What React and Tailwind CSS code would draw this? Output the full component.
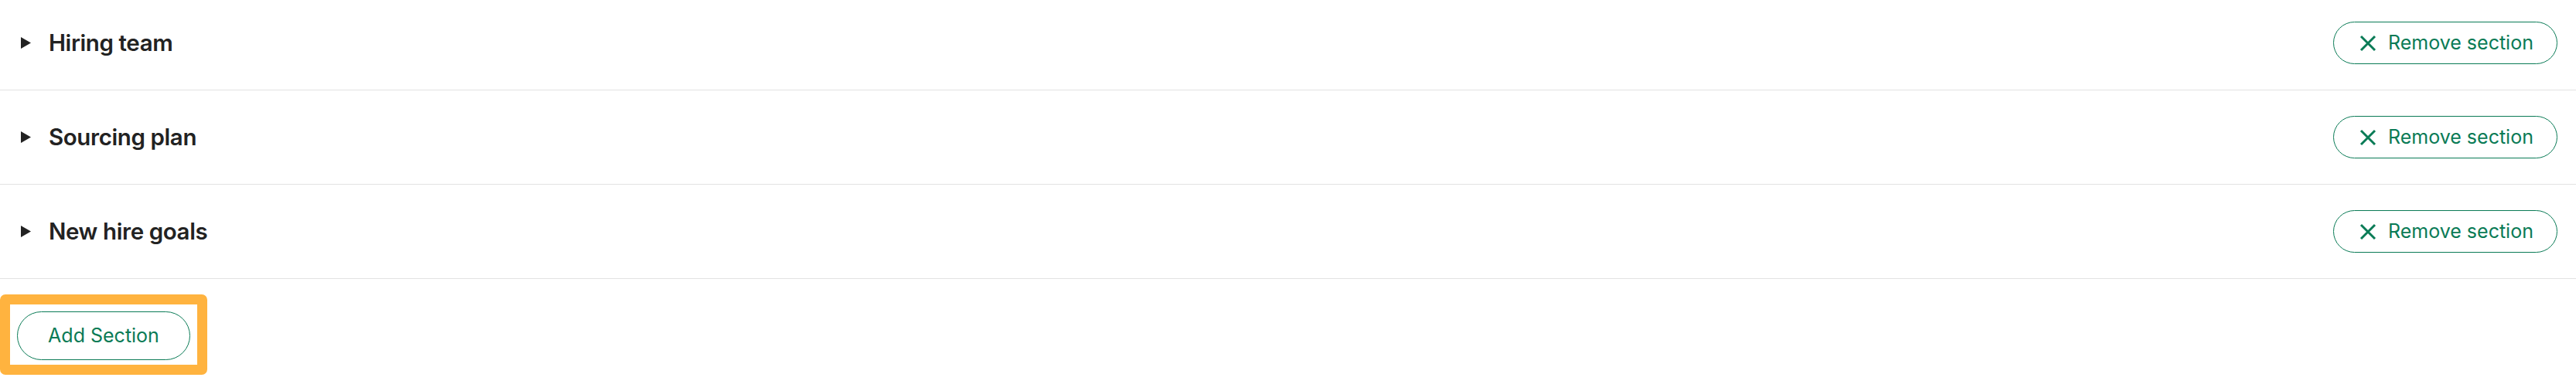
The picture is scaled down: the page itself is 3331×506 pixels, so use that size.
import { useState } from 'react';

const SECTIONS = ['Hiring team', 'Sourcing plan', 'New hire goals'];

function Caret() {
  return (
    <svg width="13" height="15" viewBox="0 0 13 15" className="shrink-0">
      <polygon points="0,0 13,7.5 0,15" fill="#222222" />
    </svg>
  );
}

function CloseIcon() {
  return (
    <svg width="22" height="22" viewBox="0 0 22 22" className="shrink-0">
      <path d="M2 2 L20 20 M20 2 L2 20" stroke="#0a7b56" strokeWidth="3" fill="none" />
    </svg>
  );
}

function SectionRow({ title, onRemove }) {
  return (
    <div className="flex h-[122px] items-center justify-between border-b border-[#e2e2e2] pl-[27px] pr-[24px]">
      <div className="flex items-center gap-[23px]">
        <Caret />
        <span className="text-[29.5px] font-semibold tracking-[-0.4px] text-[#222222]">{title}</span>
      </div>
      <button
        onClick={onRemove}
        className="flex h-[55px] w-[290px] items-center gap-[15px] rounded-full border border-[#0a7b56] pl-[33px] text-[25px] text-[#0a7b56]"
      >
        <CloseIcon />
        <span>Remove section</span>
      </button>
    </div>
  );
}

export default function App() {
  const [sections, setSections] = useState(SECTIONS);

  return (
    <div className="h-[506px] w-full overflow-hidden bg-white" style={{ fontFamily: 'Inter, "Liberation Sans", sans-serif' }}>
      <div className="-mt-[5px]">
        {sections.map((title) => (
          <SectionRow
            key={title}
            title={title}
            onRemove={() => setSections(prev => prev.filter(s => s !== title))}
          />
        ))}
      </div>
      <div className="mt-[20px] inline-block rounded-[7px] border-[13px] border-[#ffb33f] px-[9px] pt-[9px] pb-[6px]">
        <button className="flex h-[63px] w-[224px] items-center justify-center rounded-full border border-[#0a7b56] text-[25px] text-[#0a7b56]">
          Add Section
        </button>
      </div>
    </div>
  );
}
